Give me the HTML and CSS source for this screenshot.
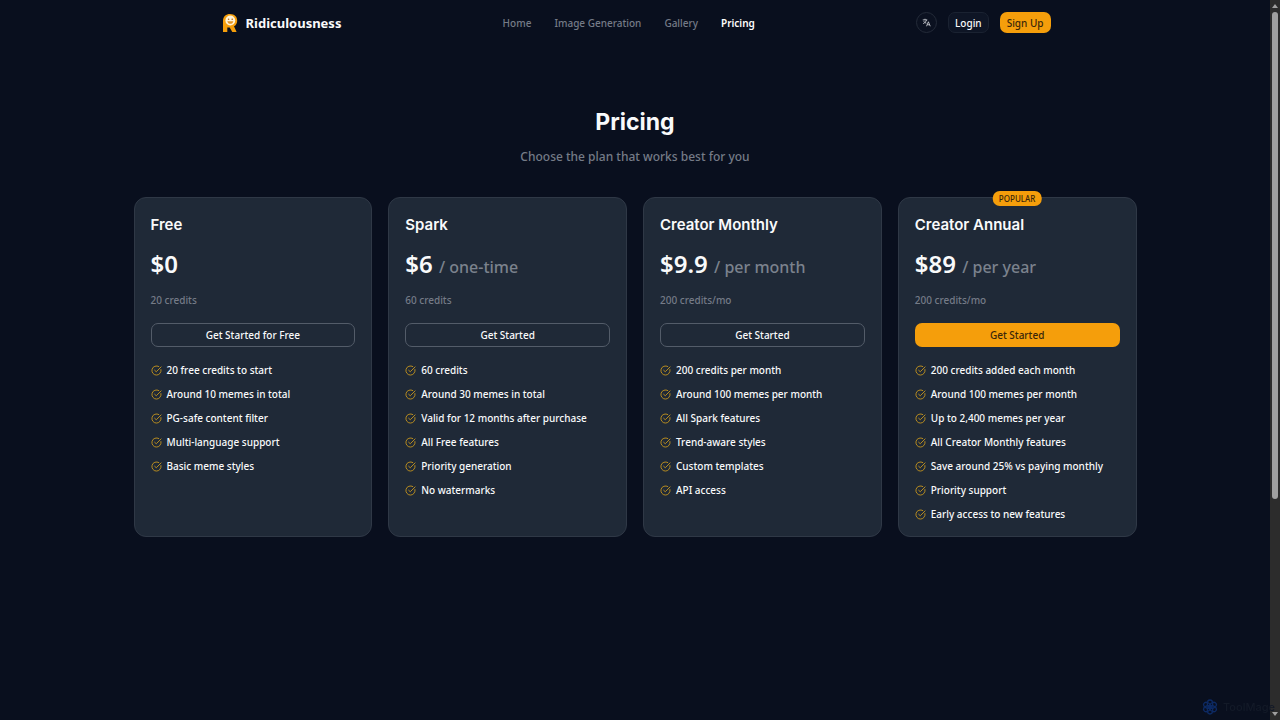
FILE: index.html
```html
<!DOCTYPE html>
<html lang="en">
<head>
<title>Pricing - Ridiculousness</title>
<meta charset="utf-8">
<meta name="viewport" content="width=device-width, initial-scale=1">
<link rel="stylesheet" href="styles.css">
</head>

<body>

<!-- icons shared by the whole page -->
<svg class="sprite" aria-hidden="true">
	<symbol id="check" viewBox="0 0 24 24">
		<path d="M21.8 10A10 10 0 1 1 17 3.3"/>
		<path d="m8 11.5 3.5 3.2L22 4.2"/>
	</symbol>
</svg>

<div class="page">

	<header class="header">
		<a class="brand" href="#">
			<svg class="logo" viewBox="0 0 16 20" aria-hidden="true">
				<path fill="#f59e0b" d="M1 19V8C1 3.500 4 1 8 1c4.500 0 7.200 2.800 7.200 6.700 0 2.600-1.200 4.500-3.200 5.600L14.600 19h-4.300l-2.600-4.400H5.300V19z"/>
				<circle cx="8.300" cy="7.500" r="4.900" fill="#fff3d6"/>
				<circle cx="6.600" cy="6.300" r=".8" fill="#b96a10"/>
				<circle cx="10.200" cy="6.300" r=".8" fill="#b96a10"/>
				<path d="M5.300 8.200h6c-.3 3.400-5.600 3.400-6 0z" fill="#e09224"/>
			</svg>
			Ridiculousness
		</a>
		<nav class="nav">
			<a href="#">Home</a>
			<a href="#">Image Generation</a>
			<a href="#">Gallery</a>
			<a href="#" class="active">Pricing</a>
		</nav>
		<div class="actions">
			<button class="lang" aria-label="Language">
				<svg viewBox="0 0 24 24" aria-hidden="true">
					<path d="M2 5h12M8 2v3M12 5c-1 5-5 8-9 10M4.500 8.500c2 3 4 4.500 7 5.500"/>
					<path d="m12 22 5-12 5 12M14 18h6"/>
				</svg>
			</button>
			<button class="btn btn-dark">Login</button>
			<button class="btn btn-primary">Sign Up</button>
		</div>
	</header>

	<main class="pricing">
		<h1>Pricing</h1>
		<p class="lead">Choose the plan that works best for you</p>

		<div class="plans">
			<section class="plan">
				<h2>Free</h2>
				<p class="price">$0</p>
				<p class="credits">20 credits</p>
				<button class="btn btn-outline">Get Started for Free</button>
				<ul>
					<li><svg><use href="#check"/></svg>20 free credits to start</li>
					<li><svg><use href="#check"/></svg>Around 10 memes in total</li>
					<li><svg><use href="#check"/></svg>PG-safe content filter</li>
					<li><svg><use href="#check"/></svg>Multi-language support</li>
					<li><svg><use href="#check"/></svg>Basic meme styles</li>
				</ul>
			</section>

			<section class="plan">
				<h2>Spark</h2>
				<p class="price">$6 <span>/ one-time</span></p>
				<p class="credits">60 credits</p>
				<button class="btn btn-outline">Get Started</button>
				<ul>
					<li><svg><use href="#check"/></svg>60 credits</li>
					<li><svg><use href="#check"/></svg>Around 30 memes in total</li>
					<li><svg><use href="#check"/></svg>Valid for 12 months after purchase</li>
					<li><svg><use href="#check"/></svg>All Free features</li>
					<li><svg><use href="#check"/></svg>Priority generation</li>
					<li><svg><use href="#check"/></svg>No watermarks</li>
				</ul>
			</section>

			<section class="plan">
				<h2>Creator Monthly</h2>
				<p class="price">$9.9 <span>/ per month</span></p>
				<p class="credits">200 credits/mo</p>
				<button class="btn btn-outline">Get Started</button>
				<ul>
					<li><svg><use href="#check"/></svg>200 credits per month</li>
					<li><svg><use href="#check"/></svg>Around 100 memes per month</li>
					<li><svg><use href="#check"/></svg>All Spark features</li>
					<li><svg><use href="#check"/></svg>Trend-aware styles</li>
					<li><svg><use href="#check"/></svg>Custom templates</li>
					<li><svg><use href="#check"/></svg>API access</li>
				</ul>
			</section>

			<section class="plan">
				<span class="badge">POPULAR</span>
				<h2>Creator Annual</h2>
				<p class="price">$89 <span>/ per year</span></p>
				<p class="credits">200 credits/mo</p>
				<button class="btn btn-primary">Get Started</button>
				<ul>
					<li><svg><use href="#check"/></svg>200 credits added each month</li>
					<li><svg><use href="#check"/></svg>Around 100 memes per month</li>
					<li><svg><use href="#check"/></svg>Up to 2,400 memes per year</li>
					<li><svg><use href="#check"/></svg>All Creator Monthly features</li>
					<li><svg><use href="#check"/></svg>Save around 25% vs paying monthly</li>
					<li><svg><use href="#check"/></svg>Priority support</li>
					<li><svg><use href="#check"/></svg>Early access to new features</li>
				</ul>
			</section>
		</div>
	</main>

</div>

<div class="scrollbar" aria-hidden="true">
	<svg viewBox="0 0 10 12"><path d="M2 8h6L5 4z"/></svg>
	<div class="track"><div class="thumb"></div></div>
	<svg viewBox="0 0 10 12"><path d="M2 4h6L5 8z"/></svg>
</div>

<div class="watermark">
	<svg viewBox="0 0 24 24" aria-hidden="true">
		<g id="petals">
			<ellipse cx="12" cy="7" rx="4" ry="5.500"/>
			<ellipse cx="12" cy="17" rx="4" ry="5.500"/>
		</g>
		<use href="#petals" transform="rotate(60 12 12)"/>
		<use href="#petals" transform="rotate(120 12 12)"/>
		<circle cx="12" cy="12" r="2"/>
	</svg>
	ToolMage
</div>

</body>
</html>
```
FILE: styles.css
```css
* { box-sizing: border-box; }

body {
	display: flex;
	min-height: 100vh;
	margin: 0;
	background: #090f1e;
	font-family: "Noto Sans", sans-serif;
	font-size: 10px;
	font-weight: 500;
	line-height: 16px;
	color: #f9fafb;
}

h1, h2, p, ul { margin: 0; padding: 0; }

a { color: inherit; text-decoration: none; }

.sprite { position: absolute; width: 0; height: 0; }

.page { flex: 1; }

/* header */
.header {
	display: flex;
	align-items: center;
	justify-content: space-between;
	max-width: 853px;
	height: 45px;
	margin: 0 auto;
	padding: 0 11px 0 13px;
}

.brand {
	display: flex;
	align-items: center;
	gap: 8px;
	font-size: 13px;
	font-weight: 700;
}

.logo { width: 16px; height: 20px; }

.nav {
	display: flex;
	gap: 23px;
	color: #757b87;
}

.nav .active {
	color: #fff;
	font-weight: 600;
}

.actions {
	display: flex;
	align-items: center;
	gap: 11px;
}

/* buttons */
button {
	font: inherit;
	color: inherit;
	cursor: pointer;
}

.lang {
	display: flex;
	align-items: center;
	justify-content: center;
	width: 21px;
	height: 21px;
	padding: 0;
	border: 1px solid #242b39;
	border-radius: 50%;
	background: #0b1120;
}

.lang svg {
	width: 9px;
	height: 9px;
	fill: none;
	stroke: #e5e7eb;
	stroke-width: 2;
}

.btn {
	height: 21px;
	padding: 0 6px;
	border: 1px solid transparent;
	border-radius: 7px;
	line-height: 16px;
}

.btn-dark {
	border-color: #1a2231;
	background: #0e1525;
}

.btn-primary {
	background: #f59e0b;
	color: #3a260a;
}

.btn-outline {
	border-color: #535c69;
	background: transparent;
}

/* pricing */
.pricing {
	max-width: 1035px;
	margin: 0 auto;
	padding: 61px 16px;
	text-align: center;
}

h1 {
	font-family: Inter, sans-serif;
	font-size: 23px;
	font-weight: 700;
	line-height: 32px;
}

.lead {
	margin-top: 9px;
	font-size: 12px;
	line-height: 20px;
	color: #757b87;
}

.plans {
	display: grid;
	grid-template-columns: repeat(4, 1fr);
	gap: 16px;
	margin-top: 30px;
	text-align: left;
}

.plan {
	position: relative;
	display: flex;
	flex-direction: column;
	padding: 16px 16px 14px;
	border: 1px solid #2f3846;
	border-radius: 12px;
	background: #1f2937;
}

h2 {
	font-family: Inter, sans-serif;
	font-size: 15px;
	font-weight: 600;
	line-height: 21px;
}

.price {
	margin-top: 13px;
	font-size: 24px;
	font-weight: 600;
	line-height: 32px;
}

.price span {
	font-size: 16px;
	font-weight: 500;
	line-height: 16px;
	color: #7b828d;
}

.credits {
	margin-top: 12px;
	color: #757b87;
}

.plan .btn {
	height: 24px;
	margin-top: 15px;
}

.plan ul {
	display: flex;
	flex-direction: column;
	gap: 8px;
	margin-top: 15px;
	list-style: none;
}

.plan li {
	display: flex;
	align-items: center;
	gap: 5px;
}

.plan li svg {
	width: 11px;
	height: 11px;
	overflow: visible;
	fill: none;
	stroke: #c3941f;
	stroke-width: 2;
	stroke-linecap: round;
}

.badge {
	position: absolute;
	top: -7px;
	left: 50%;
	transform: translateX(-50%);
	padding: 0 6px;
	border-radius: 7px;
	background: #f59e0b;
	font-size: 8px;
	line-height: 15px;
	color: #3a260a;
}

/* scrollbar */
.scrollbar {
	display: flex;
	flex-direction: column;
	width: 10px;
	background: #2c2c2c;
}

.scrollbar svg {
	width: 10px;
	height: 12px;
	fill: #a0a0a0;
}

.track { flex: 1; }

.thumb {
	width: 6px;
	height: 70%;
	margin: 0 auto;
	border-radius: 3px;
	background: #9f9f9f;
}

.watermark {
	position: fixed;
	right: 5px;
	bottom: 4px;
	display: flex;
	align-items: center;
	gap: 5px;
	font-family: Inter, sans-serif;
	font-size: 11px;
	line-height: 18px;
	color: #131a28;
}

.watermark svg {
	width: 16px;
	height: 16px;
	fill: none;
	stroke: #0d2a63;
	stroke-width: 2;
}
```
